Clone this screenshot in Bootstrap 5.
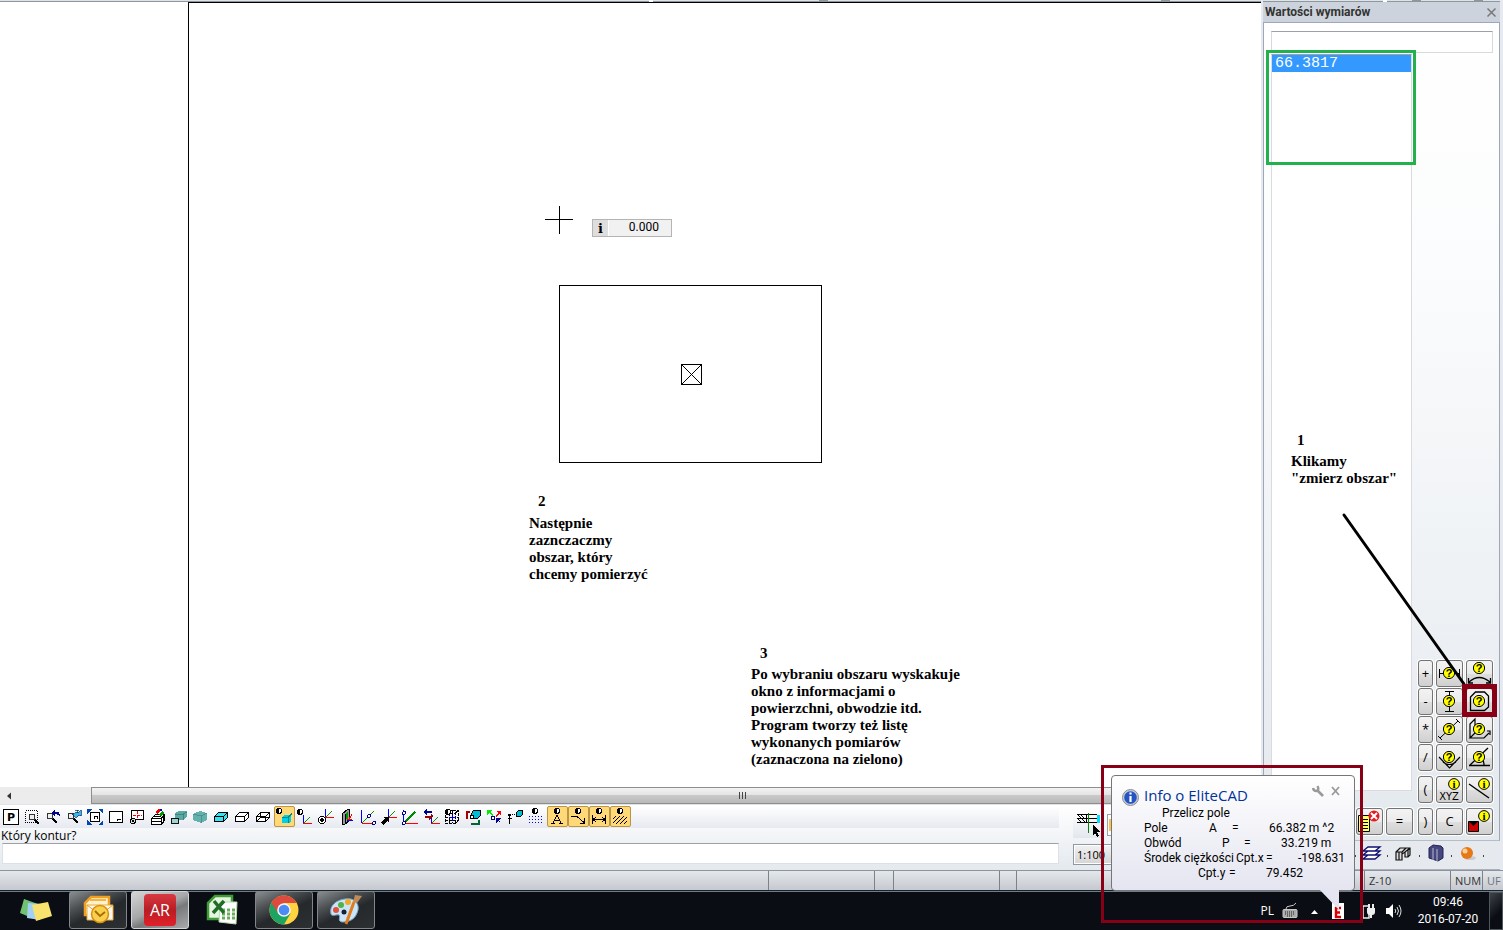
<!DOCTYPE html>
<html lang="pl">
<head>
<meta charset="utf-8">
<meta name="viewport" content="width=device-width, initial-scale=1">
<title>EliteCAD</title>
<link href="https://cdn.jsdelivr.net/npm/bootstrap@5.3.0/dist/css/bootstrap.min.css" rel="stylesheet">
<style>
body{font-family:"Open Sans","Noto Sans",sans-serif;font-size:12px;line-height:15px;color:#000;background:#e6eaef}
button,input,select{font:inherit;color:inherit;border-radius:0}
svg{display:block;overflow:visible}
svg text{stroke:none;fill:#000}
.workspace{min-height:0}
/* drawing area */
.top-edge{height:2px;background:linear-gradient(#8e979c,#8e979c) 65.4% 0/9px 2px no-repeat,linear-gradient(#8e979c,#8e979c) 92.7% 0/9px 2px no-repeat,linear-gradient(#fff,#fff) 51.6% 0/4px 2px no-repeat,linear-gradient(#dde3e8 50%,#8e979c 50%)}
.page-margin{width:188px;background:#fff}
.sheet{background:#fff;border-left:1px solid #000;border-top:1px solid #000}
.on-sheet{position:absolute}
.cross{left:356px;top:203px}
.value-tip{left:403px;top:216px;width:80px;height:18px;border:1px solid #b4b4b4;background:#f1f1f1}
.value-tip label{width:16px;flex-shrink:0;background:#dedede;border-right:1px solid #fff;font:bold 13px/17px "DejaVu Serif",serif;text-align:center}
.value-tip input{min-width:0;background:none;font:12px Roboto,sans-serif;padding:0 12px 2px 0}
.contour{left:370px;top:282px}
.remark{font:bold 15px/17px "Liberation Serif",serif}
.remark .step{padding-left:9px;margin-bottom:5px}
.remark-two{left:340px;top:490px}
.remark-three{left:562px;top:642px}
.remark-three .step,.remark-one .step{margin-bottom:4px}
/* scrollbar and command line */
.hbar{height:17px;background:#ececec}
.hbar button{width:16px;font-size:8px}
.hbar .thumb{margin-left:75px;padding-left:132px;border:1px solid #8e8e8e;background:linear-gradient(#f3f3f3,#e4e4e4 45%,#c9c9c9 50%,#b9b9b9)}
.grip{gap:2px}
.grip i{width:1px;height:7px;background:#444}
.cmd-zone{height:66px;background:linear-gradient(#fff,#e4e9ee);border-top:1px solid #dfe4ea}
.tools{height:22px;background:linear-gradient(#fff,#e6e9f0);margin-top:1px;padding-left:1px}
.tools button{width:21px;height:21px;padding:2px;border:0;background:none}
.tools svg{width:16px;height:16px;shape-rendering:crispEdges}
.tools button.on{border:1px solid #b99545;border-radius:2px;padding:1px;background:#ffd877}
.prompt{padding-left:1px;height:15px}
.cmd-box{height:21px;border:1px solid #dce1e8;border-top-color:#9ea2a8;background:#fff;margin-left:2px}
.mini-dock{width:188px;margin-left:14px;padding-top:5px}
.mini-dock .pic{height:28px;background:linear-gradient(#fff,#e3e7ed);padding:4px 4px;width:30px;margin-bottom:6px}
.mini-dock .edge{width:60px;height:22px;border:1px solid #9aa3ad;background:#fff;margin-top:4px}
.mini-dock .edge i{display:block;width:4px;height:12px;margin:4px 1px;background:#ffc24d}
.mini-dock select{display:block;height:21px;width:120px;border:1px solid #8f99a5;outline:1px solid #fff;outline-offset:-2px;background:linear-gradient(#f2f2f2,#d4d4d4);appearance:none;font-size:11px;padding:0 3px}
/* measurements panel */
.side{width:242px;border-left:2px solid #e6e9ef;border-right:3px solid #e6e9ef;background:#e6eaef;position:relative}
.side-head{height:20px;background:#ccd3dc;font:bold 12px Roboto,sans-serif;color:#333;padding:0 2px}
.side-head button{border:0;background:none;padding:0 2px}
.side-body{border:1px solid #9fa8b5;border-bottom:1px solid #b7bdc7;background:linear-gradient(#fff,#fbfcfd 30%,#e4e9ee);padding:8px 6px 7px 7px}
.side-body>input{height:22px;border:1px solid #d5dae0;border-top-color:#9ea2a8;background:#fff}
.results{width:141px;margin-top:1px;margin-bottom:42px;background:#fff;border:1px solid #d9dbe0;border-top-color:#9ea2a8;list-style:none;padding:0}
.results li{background:#39f;color:#fff;font:15px/17px "Liberation Mono",monospace;padding-left:3px}
.keys{position:absolute;right:7px;bottom:35px;display:flex;flex-direction:column;align-items:flex-end;gap:1px}
.keys>div{display:flex;gap:3px}
.keys button{width:27px;height:27px;padding:0;border:1px solid #737373;border-radius:3px;background:linear-gradient(#f3f3f3,#ebebeb 50%,#dedede 52%,#d0d0d0);box-shadow:0 0 0 1px #fff;display:flex;align-items:center;justify-content:center;font-size:13px}
.keys button.slim{width:15px}
.keys .part{margin-top:4px}
.keys .wide{margin-right:2px}
.side-foot{height:29px;padding:0 16px 5px 0;gap:6px;border-bottom:1px solid #aab1bc}
.side-foot button{border:0;background:none;padding:0;width:19px;height:20px}
.side-foot .dot{width:1px;height:2px;background:#444;margin-top:6px}
.ring-green{position:absolute;left:3px;top:50px;width:150px;height:115px;border:3px solid #22b14c}
.ring-red{position:absolute;right:3px;bottom:153px;width:35px;height:33px;border:5px solid #880015}
.pointer{position:absolute;right:34px;bottom:184px}
.remark-one{position:absolute;left:28px;top:432px}
.remark-one .step{padding-left:6px}
/* status bar */
.statusline{height:20px;border-top:1px solid #8e949d;background:linear-gradient(#e4e7eb,#c5c9cf);font-size:11px;color:#333;line-height:20px}
.statusline span{border-left:1px solid #7d828a;padding-left:4px;height:19px}
.w-a{width:106px}.w-b{width:19px}.w-c{width:17px}.w-d{width:348px}.w-e{width:86px}.w-f{width:32px}.w-g{width:21px}
/* taskbar */
.taskbar{height:40px;background:#0a0d14;border-top:1px solid #16222e;box-shadow:inset 0 1px #6f7d87;padding-left:7px;color:#fff}
.apps{gap:4px}
.apps button{width:58px;height:38px;border:1px solid transparent;background:none;padding:0;display:flex;align-items:center;justify-content:center;border-radius:3px}
.apps button.open{border-color:#83878a;background:linear-gradient(155deg,#8b8e90,#4d5153 30%,#25292b 55%,#2c3032)}
.apps button.live{border-color:#d2d4d5;background:linear-gradient(155deg,#d5d5d5,#a6a7a8 45%,#77797a 60%,#a9aaab)}
.ar{width:32px;height:32px;border-radius:4px;background:linear-gradient(#d93a42,#b81d23 50%,#e32029);color:#fff;font-size:16px;line-height:32px}
.tray button{border:0;background:none;padding:0}
.tray .gap-s{margin-right:6px}
.tray .gap-m{margin-right:13px}
.tray .clock{width:82px;font:12px/17px Roboto,sans-serif;text-align:center}
.desk{width:14px;height:38px;border:1px solid #4f565c!important;background:linear-gradient(135deg,#3d4348,#0a0d14 60%)!important}
/* balloon */
.ring-info{position:absolute;right:140px;bottom:7px;width:262px;height:158px;border:3px solid #880015;padding:7px}
.balloon{width:244px;height:116px;border:1px solid #767676;border-radius:4px;background:linear-gradient(#fff,#e4e5f0);position:relative;padding:9px 10px 0 10px}
.balloon h2{font-size:15px;line-height:20px;margin:0 0 0 5px;color:#039;font-weight:400}
.balloon .tail{position:absolute;left:207px;top:113px}
.balloon dl{margin:0 0 0 22px;font:12px/15px Roboto,"Open Sans",sans-serif}
.balloon dl>div{display:grid;white-space:nowrap}
.balloon dt,.balloon dd{font-weight:400;margin:0}
.r-head{padding-left:18px}
.r-area{grid-template-columns:65px 23px 37px auto}
.r-perim{grid-template-columns:78px 22px 37px auto}
.r-cx{grid-template-columns:92px 30px 32px auto}
.r-cy{grid-template-columns:31px 37px auto;padding-left:54px}
</style>
</head>
<body class="vh-100 d-flex flex-column overflow-hidden position-relative">
<svg width="0" height="0" class="position-absolute" aria-hidden="true">
<defs>
<g id="lamp"><circle cx="8" cy="3" r="2.5" fill="#fff" stroke="#000"/><path d="M8 .5a2.5 2.5 0 000 5z"/></g>
<g id="lens"><path d="M10 10l5 5" stroke="#000" stroke-width="2.400"/><circle cx="8" cy="8" r="3" fill="#eee" stroke="#333"/></g>
<g id="axes" fill="none"><path d="M1.500 0v9" stroke="#00f"/><path d="M1 8.500h9" stroke="#f00"/><path d="M2 8l6-6" stroke="#090"/></g>
<g id="ask"><circle cx="0" cy="0" r="5.600" fill="#ff0" stroke="#000" stroke-width="1"/><text x="0" y="4" text-anchor="middle" font-family="Liberation Sans" font-weight="700" font-size="11">?</text></g>
<g id="inf"><circle cx="0" cy="0" r="5.400" fill="#ff0" stroke="#000" stroke-width="1"/><text x="0" y="4" text-anchor="middle" font-family="Liberation Serif" font-weight="700" font-size="11">i</text></g>
<g id="box3d"><path d="M1.500 7.500l4-4h9v5l-4 4h-9z"/><path d="M1.500 7.500h9v5M10.500 7.500l4-4" fill="none"/></g>
</defs>
</svg>

<main class="workspace d-flex flex-grow-1">
  <section class="d-flex flex-column flex-grow-1">
    <div class="top-edge"></div>
    <div class="d-flex flex-grow-1">
      <div class="page-margin"></div>
      <div class="sheet flex-grow-1 position-relative">
        <svg class="on-sheet cross" width="28" height="28" stroke="#000" shape-rendering="crispEdges"><path d="M0 13.500h28M14.500 0v28"/></svg>
        <div class="on-sheet value-tip d-flex"><label for="len">i</label><input id="len" class="border-0 w-100 text-end" value="0.000"></div>
        <svg class="on-sheet contour" width="263" height="178" fill="none" stroke="#000"><path shape-rendering="crispEdges" d="M.5.5h262v177H.5zM122.500 79.500h20v20h-20z"/><path d="M122.500 79.500l20 20M142.500 79.500l-20 20"/></svg>
        <div class="on-sheet remark remark-two"><div class="step">2</div>Następnie<br>zaznczaczmy<br>obszar, który<br>chcemy pomierzyć</div>
        <div class="on-sheet remark remark-three"><div class="step">3</div>Po wybraniu obszaru wyskakuje<br>okno z informacjami o<br>powierzchni, obwodzie itd.<br>Program tworzy też listę<br>wykonanych pomiarów<br>(zaznaczona na zielono)</div>
      </div>
    </div>
    <div class="hbar d-flex">
      <button class="border-0 bg-transparent p-0" aria-label="W lewo"><svg width="16" height="15"><path d="M11 4.500v7L7 8z" fill="#333"/></svg></button>
      <div class="thumb flex-grow-1 d-flex align-items-center justify-content-center"><div class="grip d-flex"><i></i><i></i><i></i></div></div>
    </div>
    <div class="cmd-zone d-flex">
      <div class="flex-grow-1">
        <div class="tools d-flex" role="toolbar" aria-label="Widok">
          <button aria-label="P"><svg viewBox="0 0 16 16"><rect x=".5" y=".5" width="15" height="15" fill="#fff" stroke="#000"/><text x="8" y="12" text-anchor="middle" font-family="DejaVu Sans" font-weight="700" font-size="11">P</text></svg></button>
          <button aria-label="Zoom oknem"><svg viewBox="0 0 16 16"><rect x="1.500" y="1.500" width="12" height="12" fill="none" stroke="#000" stroke-dasharray="1 1"/><use href="#lens"/></svg></button>
          <button aria-label="Poprzedni widok"><svg viewBox="0 0 16 16"><use href="#lens" x="-3" y="-1"/><path d="M6 4l4-4v2.500q5 0 5 4.500-1.500-2-5-1.500V8z" fill="#00008b"/></svg></button>
          <button aria-label="Dynamiczny zoom"><svg viewBox="0 0 16 16"><use href="#lens" x="-3" y="-1"/><path d="M6 5h2l2-2h3l2-2v6l-2-1-2 2H9zM9 1.500h4M11.500 1v3" fill="#3bb5ea" stroke="#036" stroke-width=".7"/></svg></button>
          <button aria-label="Całość"><svg viewBox="0 0 16 16"><path d="M0 0h5L0 5zM16 0v5l-5-5zM0 16v-5l5 5zM16 16h-5l5-5z" fill="#0046b8"/><path d="M3.500 3.500h9v9h-9z" fill="#fff" stroke="#000"/><path d="M7.500 9.500v-2h3v2" fill="none" stroke="#000"/></svg></button>
          <button aria-label="Strona"><svg viewBox="0 0 16 16"><path d="M1.500 2.500h13v11h-13z" fill="#fff" stroke="#000"/><path d="M9.500 12v-1.500h3" fill="none" stroke="#000"/></svg></button>
          <button aria-label="Środek"><svg viewBox="0 0 16 16"><path d="M2.500 1.500h12v9h-12z" fill="#fff" stroke="#000"/><path d="M4 6.500h9M8.500 2v8" stroke="#f00" stroke-dasharray="3 1"/><circle cx="4" cy="12" r="2.500" fill="#ddd" stroke="#000"/><circle cx="4" cy="12" r=".8"/></svg></button>
          <button aria-label="Drukuj"><svg viewBox="0 0 16 16"><path d="M1.500 9.500l4-4h9v6l-3 4h-10z" fill="#fff" stroke="#000"/><path d="M1 9.500h10l4-4M2 12.500h9M11.500 9v6M4 7.500h7M13 8v5" stroke="#000" fill="none"/><path d="M5 3l4-3 2 1-4 4z" fill="#e00"/><path d="M8 6l4-4 2 2-3 3z" fill="#090"/><path d="M10 0h2v2h-2z" fill="#00c"/></svg></button>
          <button aria-label="Cień i rzut"><svg viewBox="0 0 16 16"><path d="M4 4l4-2h8v6l-4 3H4z" fill="#5aa9a5"/><path d="M4 5h8l4-2M12 5v6" fill="none" stroke="#3f8582"/><path d="M.5 9.500h7v5h-7z" fill="#9cd4d4" stroke="#111"/></svg></button>
          <button aria-label="Cień"><svg viewBox="0 0 16 16"><path d="M1 5l7-3 7 2v7l-6 3-8-3z" fill="#64b0ad"/><path d="M1 5l8 2 6-3M9 7v7" stroke="#4b918e" fill="none"/></svg></button>
          <button aria-label="Bryła"><svg viewBox="0 0 16 16"><use href="#box3d" fill="#35e4f4" stroke="#000"/></svg></button>
          <button aria-label="Ukryte linie"><svg viewBox="0 0 16 16"><use href="#box3d" fill="#fff" stroke="#000"/></svg></button>
          <button aria-label="Siatka"><svg viewBox="0 0 16 16"><use href="#box3d" fill="#fff" stroke="#000"/><path d="M1.500 12.500l4-4h9M5.500 3v5" fill="none" stroke="#000"/></svg></button>
          <button class="on" aria-label="Pokaż bryły"><svg viewBox="0 0 16 16"><use href="#lamp" x="-5" y="-1"/><path d="M6 8l2-2h7v6l-2 2H6z" fill="#00cfe8"/><path d="M6 8.500h6l4-4M12.500 8v6" stroke="#088" fill="none"/></svg></button>
          <button aria-label="Układ"><svg viewBox="0 0 16 16"><use href="#lamp" x="-5"/><use href="#axes" x="5" y="6"/></svg></button>
          <button aria-label="Punkt bazowy"><svg viewBox="0 0 16 16"><use href="#axes" x="6" y="0"/><circle cx="4" cy="11" r="3.500" fill="#fff" stroke="#000"/><circle cx="4" cy="11" r="1.700"/></svg></button>
          <button aria-label="Płaszczyzna"><svg viewBox="0 0 16 16"><path d="M3.500 4.500l5-4h2v11l-5 4h-2z" fill="#999" stroke="#000"/><path d="M6.500 5v10" stroke="#000"/><path d="M7 4l2-2v8H7z" fill="#090"/><path d="M8 10h5M9 12l4-7" stroke="#f00"/><path d="M8 11.500h6" stroke="#00f"/></svg></button>
          <button aria-label="Obrót osi"><svg viewBox="0 0 16 16" fill="none"><path d="M1.500 1v13" stroke="#00f"/><path d="M2 14.500h13" stroke="#f00"/><path d="M2 14L14 2" stroke="#090"/><circle cx="9" cy="7" r="1.500" fill="#fff" stroke="#000080"/><circle cx="14" cy="14" r="1.500" fill="#fff" stroke="#000080"/></svg></button>
          <button aria-label="Przesuń układ"><svg viewBox="0 0 16 16"><use href="#axes" x="6"/><path d="M0 13l4-3-2-2h6v6l-2-2-4 4z"/></svg></button>
          <button aria-label="Trzy punkty"><svg viewBox="0 0 16 16" fill="none"><path d="M1.500 1v13" stroke="#00f"/><path d="M2 14.500h14" stroke="#f00"/><path d="M2 14L13 3" stroke="#080" stroke-width="1.500"/><circle cx="2" cy="4" r="1.500" fill="#fff" stroke="#000080"/><circle cx="2" cy="14" r="1.500" fill="#fff" stroke="#000080"/></svg></button>
          <button aria-label="Obróć układ"><svg viewBox="0 0 16 16"><use href="#axes" x="7" y="6"/><path d="M4 0L0 3l4 3V4h5V2H4z" fill="#00008b"/><path d="M2 7v2h4v2l4-4-2-3v3z" fill="#900"/></svg></button>
          <button aria-label="Rastr 3D"><svg viewBox="0 0 16 16"><path d="M1.500 4.500h10v10h-10zM4.500 1.500h10v10l-3 3M1 8.500h13M1 11.500h13M5.500 4v11M8.500 1v13M11.500 4l3-3" fill="none" stroke="#000" stroke-dasharray="3 1"/><use href="#lamp" x="-4" y="0"/><path d="M5 8.500h7M8.500 6v6" stroke="#00c"/></svg></button>
          <button aria-label="Obrót 3D"><svg viewBox="0 0 16 16"><path d="M5 2.500H1.500V10" fill="none" stroke="#a00" stroke-width="2"/><path d="M6 14.500h8V11" fill="none" stroke="#063" stroke-width="2"/><path d="M6.500 4.500l2-3h7v5l-3 3h-6z" fill="#00bcd4" stroke="#000"/><circle cx="7" cy="8" r="2" fill="#fff" stroke="#000"/></svg></button>
          <button aria-label="Kierunki"><svg viewBox="0 0 16 16"><path d="M1 1h5L4 3l3 3-1 1-3-3-2 2z" fill="#0e0"/><path d="M15 2h-5l2 2-3 3 1 1 3-3 2 2z" fill="#f00"/><circle cx="7" cy="9" r="2" fill="#fff" stroke="#00008b"/><path d="M10 9h5l-2 2 2 4-3-3-2 2z" fill="#00008b"/></svg></button>
          <button aria-label="Obserwator"><svg viewBox="0 0 16 16"><path d="M2.500 7v8M1 9.500h4" stroke="#000"/><path d="M1 5h3v2H1z"/><path d="M5 5.500h5" stroke="#000" stroke-dasharray="1 1"/><path d="M9.500 3.500l2-2h4v4l-2 2h-4z" fill="#00bcd4" stroke="#000"/></svg></button>
          <button aria-label="Rastr"><svg viewBox="0 0 16 16"><use href="#lamp" x="-1" y="-1"/><path d="M1 7.500h14M1 10.500h14M1 13.500h14" stroke="#00f" stroke-dasharray="1 2"/></svg></button>
          <button class="on" aria-label="Tekst"><svg viewBox="0 0 16 16"><use href="#lamp" y="-1"/><path d="M4 14L8 6l4 8M5 11.500h6M2 14.500h4M10 14.500h4" fill="none" stroke="#000"/></svg></button>
          <button class="on" aria-label="Linia odniesienia"><svg viewBox="0 0 16 16"><use href="#lamp" y="-1"/><path d="M1 7.500h6l7 6M14.500 9v5H10" fill="none" stroke="#000"/></svg></button>
          <button class="on" aria-label="Wymiar"><svg viewBox="0 0 16 16"><use href="#lamp" y="-1"/><path d="M1.500 6v9M14.500 6v9M2 10.500h12M5 8l-3 2.500L5 13M11 8l3 2.500-3 2.500" fill="none" stroke="#000"/></svg></button>
          <button class="on" aria-label="Kreskowanie"><svg viewBox="0 0 16 16"><use href="#lamp" y="-1"/><path d="M1 10l3-3M1 14l7-7M4 15l8-8M8 15l7-7M12 15l3-3" stroke="#000"/></svg></button>
        </div>
        <label class="prompt d-block" for="cmd">Który kontur?</label>
        <div class="d-flex"><input id="cmd" class="cmd-box flex-grow-1"></div>
      </div>
      <div class="mini-dock">
        <div class="d-flex gap-1">
          <div class="pic"><svg width="24" height="24" viewBox="0 0 24 24" shape-rendering="crispEdges"><path d="M0 .5h11M0 4.500h20M0 8.500h20M9.500 0v9M1 1l3 3M4 1l3 3M1 5l3 3M5 5l3 3" stroke="#000"/><path d="M12 .5h8" stroke="#000"/><path d="M20 1h3v8h-3z" fill="#0df"/><path d="M11.500-1v20" stroke="#080"/><path d="M16 11v10l2-2 2 4 2-1-2-4h3z"/></svg></div>
          <div class="edge"><i></i></div>
        </div>
        <select aria-label="Skala"><option>1:100</option></select>
      </div>
    </div>
  </section>

  <aside class="side d-flex flex-column flex-shrink-0">
    <div class="top-edge"></div>
    <div class="side-head d-flex justify-content-between align-items-center"><span>Wartości wymiarów</span><button aria-label="Zamknij"><svg width="9" height="9" stroke="#777" stroke-width="1.500"><path d="M.5.500l8 8M8.500.500l-8 8"/></svg></button></div>
    <div class="side-body flex-grow-1 d-flex flex-column">
      <input aria-label="Wyrażenie">
      <ul class="results flex-grow-1"><li>66.3817</li></ul>
    </div>
    <div class="side-foot d-flex align-items-center justify-content-end">
      <i class="dot"></i>
      <button aria-label="Warstwy"><svg width="19" height="20" fill="#fff" stroke="#111170" stroke-width="1.300"><path d="M1 16l5-4h12l-5 4zM1 12l5-4h12l-5 4zM1 8l5-4h12l-5 4z"/></svg></button>
      <i class="dot"></i>
      <button aria-label="Profile"><svg width="19" height="20" fill="#ddd" stroke="#111" stroke-width="1.200"><path d="M2 9l4-4h10v7l-2 2h-3V9l-3 2v6H2zM2 9h6M8 9v8M11 9l5-4M8 9l4-4M5 9v8M14 7v7"/></svg></button>
      <i class="dot"></i>
      <button aria-label="Biblioteki"><svg width="19" height="20" fill="#45457f" stroke="#22224f"><path d="M3 5l4-3 8 1 2 2v10l-5 3-9-3z"/><path d="M7 5v12M11 6v12" stroke="#bbc"/></svg></button>
      <i class="dot"></i>
      <button aria-label="Materiały"><svg width="19" height="20"><ellipse cx="12" cy="15" rx="6" ry="2" fill="#c9ccd2"/><circle cx="9" cy="10" r="6" fill="#e67817"/><circle cx="7" cy="8" r="2.500" fill="#ffd09a"/></svg></button>
      <i class="dot"></i>
    </div>
    <div class="keys">
      <div><button class="slim">+</button><button aria-label="Odległość pozioma"><svg width="25" height="25" stroke="#000"><path d="M2.500 8v9M22.500 8v9M2 12.500h21"/><use href="#ask" x="12" y="12"/></svg></button><button aria-label="Długość łuku"><svg width="25" height="25" fill="none" stroke="#000" stroke-width="1.300"><path d="M2 21q10-9 21 0M1.500 17v5H6M23.500 17v5H19"/><use href="#ask" x="12" y="7"/></svg></button></div>
      <div><button class="slim">-</button><button aria-label="Odległość pionowa"><svg width="25" height="25" stroke="#000"><path d="M8 2.500h9M8 22.500h9M12.500 2v21"/><use href="#ask" x="12" y="12"/></svg></button><button aria-label="Zmierz obszar"><svg width="25" height="25" fill="none" stroke="#000" stroke-width="1.300"><path d="M3.500 21.500V8l5-5h9l4 4v11l-4 3.500z"/><use href="#ask" x="12" y="12"/></svg></button></div>
      <div><button class="slim">*</button><button aria-label="Odległość"><svg width="25" height="25" stroke="#000"><path d="M3 21L21 4M1 19l4 4M19 2l4 4"/><use href="#ask" x="12" y="12"/></svg></button><button aria-label="Kąt bryłowy"><svg width="25" height="25" fill="none" stroke="#000" stroke-width="1.200"><path d="M3 21V7l5-5v14l-5 5h14l5-5M20 14h3v4"/><use href="#ask" x="12" y="12"/></svg></button></div>
      <div><button class="slim">/</button><button aria-label="Kąt"><svg width="25" height="25" fill="none" stroke="#000" stroke-width="1.200"><path d="M2 12l10.500 11L23 12M6 17q6 5 13 0"/><use href="#ask" x="12" y="12"/></svg></button><button aria-label="Kąt nachylenia"><svg width="25" height="25" fill="none" stroke="#000" stroke-width="1.300"><path d="M2 20.500h21M3 20L21 3M17 20q0-5-3-8"/><use href="#ask" x="12" y="12"/></svg></button></div>
      <div class="part"><button class="slim">(</button><button aria-label="XYZ"><svg width="25" height="25"><use href="#inf" x="17" y="7"/><text x="12" y="23" text-anchor="middle" font-family="DejaVu Sans Condensed, DejaVu Sans" font-size="11">XYZ</text></svg></button><button aria-label="Info o linii"><svg width="25" height="25" stroke="#000"><path d="M2 7l20 14" stroke-width="1.400"/><use href="#inf" x="17" y="7"/></svg></button></div>
      <div class="part"><button aria-label="Usuń listę"><svg width="25" height="25"><path d="M1.500 6.500h11v16h-11z" fill="#ff6" stroke="#000"/><path d="M4 10.500h7M4 13.500h7M4 16.500h7M4 19.500h7" stroke="#000"/><circle cx="17" cy="7" r="5.500" fill="#e31b23"/><path d="M14 4l6 6M20 4l-6 6" stroke="#fff" stroke-width="2"/></svg></button><button class="wide">=</button><button class="slim">)</button><button>C</button><button aria-label="Info o obszarze"><svg width="25" height="25"><path d="M1.500 12.500h10v10h-10z" fill="#d00000" stroke="#000"/><path d="M1.500 12h10l-5 5z"/><use href="#inf" x="17" y="7"/></svg></button></div>
    </div>
    <div class="ring-green"></div>
    <div class="remark remark-one"><div class="step">1</div>Klikamy<br>"zmierz obszar"</div>
    <svg class="pointer" width="124" height="173"><path d="M2 2l120 169" stroke="#000" stroke-width="3" stroke-linecap="round"/></svg>
    <div class="ring-red"></div>
  </aside>
</main>

<footer class="statusline d-flex justify-content-end flex-shrink-0">
  <span class="w-a"></span><span class="w-b"></span><span class="w-a"></span><span class="w-c"></span><span class="w-d"></span><span class="w-e">Z-10</span><span class="w-f">NUM</span><span class="w-g text-secondary">UF</span>
</footer>

<nav class="taskbar d-flex justify-content-between flex-shrink-0" aria-label="Pasek zadań">
  <div class="apps d-flex">
    <button aria-label="Karteczki"><svg width="34" height="28"><path d="M5 3l14 5-6 14L1 17z" fill="#71c173"/><path d="M9 7l13 1-1 16-13-2z" fill="#a4d0f5"/><path d="M13 9l16-3 4 14-16 5z" fill="#f8e36e"/></svg></button>
    <button class="open" aria-label="Outlook"><svg width="32" height="32"><path d="M9 3h18v18H3V9z" fill="#fff3cf" stroke="#f0a020" stroke-width="2.500"/><path d="M8 6h16" stroke="#f4b545" stroke-width="2"/><path d="M5 11h26v15H5z" fill="#fff8ea" stroke="#e9a83a"/><path d="M5 11l13 10 13-10" fill="none" stroke="#dfa130"/><circle cx="18" cy="20" r="8.500" fill="#f9cf4e" stroke="#d79010" stroke-width="1.500"/><path d="M13 17l5 5 5-4" fill="none" stroke="#a86d00" stroke-width="1.800"/></svg></button>
    <button class="live"><span class="ar">AR</span></button>
    <button aria-label="Excel"><svg width="32" height="32"><path d="M9 2h17v23H2V9z" fill="#e6f5e0" stroke="#3f9b35" stroke-width="2.500"/><path d="M14 8h17l-1 22-17-2z" fill="#fff" stroke="#b8dcb0"/><path d="M16 16h3M21 16h3M26 16h3M16 20h3M21 20h3M26 20h3M16 24h3M21 24h3M26 24h3" stroke="#68ad5a" stroke-width="3"/><path d="M8 7l10 12M18 7L7 19" stroke="#1f6d27" stroke-width="3.500"/></svg></button>
    <button class="open" aria-label="Chrome"><svg width="30" height="30" viewBox="0 0 30 30"><circle cx="15" cy="15" r="14.500" fill="#ffd23f"/><path d="M2.400 7.800A14.500 14.500 0 0015 29.500l6.500-11L15 15z" fill="#1da362"/><path d="M2.400 7.800A14.500 14.500 0 0127.600 8H15l-6 10z" fill="#dd4b3e"/><circle cx="15" cy="15" r="6.800" fill="#f5f5f5"/><circle cx="15" cy="15" r="5.300" fill="#4b8bf5"/></svg></button>
    <button class="open" aria-label="Paint"><svg width="34" height="32"><path d="M16 5c10-2 16 6 12 14-3 8-10 9-15 9-5-1-1-5-3-7-2-1-7 2-8-1C0 12 7 6 16 5z" fill="#c9e5f6" stroke="#75a9cf"/><circle cx="7" cy="16" r="3" fill="#e34f3c"/><circle cx="12" cy="11" r="3" fill="#55b045"/><circle cx="19" cy="8" r="3" fill="#f3a829"/><circle cx="15" cy="18" r="2.500" fill="#142230"/><path d="M17 30l8-22" stroke="#e27b1c" stroke-width="3"/><path d="M24 8l2-7 7 1-5 7z" fill="#c28a5a"/></svg></button>
  </div>
  <div class="tray d-flex align-items-center">
    <button class="text-white me-2">PL</button>
    <button class="gap-m" aria-label="Klawiatura"><svg width="16" height="16" fill="none" stroke="#c8c8c8"><path d="M4 6q0-3 4-3t6-3"/><rect x="1" y="6.500" width="14" height="8" rx="1" fill="#aaa"/><path d="M3 9h10M3 11h10M5 13h6" stroke="#222" stroke-dasharray="1 1"/></svg></button>
    <button class="gap-m" aria-label="Pokaż ukryte"><svg width="7" height="16"><path d="M0 11l3.500-4L7 11z" fill="#fff"/></svg></button>
    <button class="me-3" aria-label="EliteCAD"><svg width="14" height="18"><path d="M1 1h12v16H1z" fill="#fff"/><path d="M10 6H5v9h5M5 10.500h4" stroke="#d00" stroke-width="2.400" fill="none"/></svg></button>
    <button class="me-2" aria-label="Zasilanie"><svg width="16" height="16" fill="#eee"><path d="M2 3h6v12H2z" fill="none" stroke="#eee" stroke-width="1.500"/><path d="M6 5h8v4q0 3-3 3v3H9v-3q-3 0-3-3zM7 1h2v4H7zM11 1h2v4h-2z"/></svg></button>
    <button class="gap-s" aria-label="Głośność"><svg width="16" height="16" fill="#fff"><path d="M1 5h3l4-4v14l-4-4H1z"/><path d="M10 6q1.500 2 0 4M12 4q3 4 0 8M14 2q4 6 0 12" fill="none" stroke="#ddd"/></svg></button>
    <div class="clock">09:46<br>2016-07-20</div>
    <button class="desk" aria-label="Pokaż pulpit"></button>
  </div>
</nav>

<div class="ring-info">
  <div class="balloon" role="status">
    <svg class="tail" width="20" height="22"><path d="M0 0h20v21z" fill="#e4e5f0"/></svg>
    <div class="d-flex">
      <svg width="17" height="17" class="mt-1"><circle cx="8.500" cy="8.500" r="8" fill="#c8ccd5" stroke="#8b8f99"/><circle cx="8.500" cy="8.500" r="6.300" fill="#2455c3"/><path d="M8.500 7v6M8.500 3.500v2" stroke="#fff" stroke-width="2.200"/></svg>
      <h2 class="flex-grow-1">Info o EliteCAD</h2>
      <svg width="32" height="12" fill="none" stroke="#999" stroke-width="1.800"><path d="M5 5l6 6" stroke-width="2.600"/><path d="M5.500 1q2 4-1 5-3 0-3.500-3" stroke-width="2.400"/><path d="M20 2l7 8M27 2l-7 8"/></svg>
    </div>
    <dl>
      <div class="r-head"><dt>Przelicz pole</dt></div>
      <div class="r-area"><dt>Pole</dt><dd>A</dd><dd>=</dd><dd>66.382 m ^2</dd></div>
      <div class="r-perim"><dt>Obwód</dt><dd>P</dd><dd>=</dd><dd>33.219 m</dd></div>
      <div class="r-cx"><dt>Środek ciężkości</dt><dd>Cpt.x</dd><dd>=</dd><dd>-198.631</dd></div>
      <div class="r-cy"><dt>Cpt.y</dt><dd>=</dd><dd>79.452</dd></div>
    </dl>
  </div>
</div>
<script src="https://cdn.jsdelivr.net/npm/bootstrap@5.3.0/dist/js/bootstrap.bundle.min.js"></script>
</body>
</html>
